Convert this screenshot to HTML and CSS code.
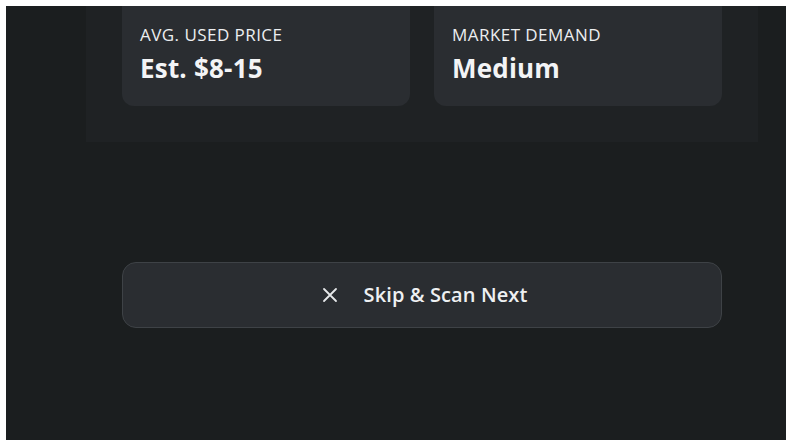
FILE: index.html
```html
<!DOCTYPE html>
<html>
<head>
<meta charset="utf-8">
<link rel="stylesheet" href="styles.css">
</head>
<body>
<div class="app">
  <div class="panel">
    <div class="card">
      <div class="label">AVG. USED PRICE</div>
      <div class="value">Est. $8-15</div>
    </div>
    <div class="card">
      <div class="label">MARKET DEMAND</div>
      <div class="value">Medium</div>
    </div>
  </div>
  <button class="skip">
    <svg class="x" width="16" height="16" viewBox="0 0 16 16"><path d="M2 2L14 14M14 2L2 14" stroke="#e6e8ea" stroke-width="1.8" stroke-linecap="round"/></svg>
    <span>Skip &amp; Scan Next</span>
  </button>
</div>
</body>
</html>
```
FILE: styles.css
```css
html, body { background: #ffffff; }
body { margin: 6px; font-family: "Open Sans", "Noto Sans", sans-serif; }
.app {
  width: 780px;
  height: 434px;
  background: #1b1e1f;
  box-sizing: border-box;
  padding-left: 80px;
  overflow: hidden;
}
.panel {
  width: 672px;
  box-sizing: border-box;
  padding: 0 36px 36px;
  background: #1f2224;
  display: grid;
  grid-template-columns: 1fr 1fr;
  gap: 24px;
}
.card {
  height: 100px;
  box-sizing: border-box;
  background: #2a2d31;
  border-radius: 0 0 12px 12px;
  padding: 18px 18px 0;
  color: #f3f4f6;
}
.label { font-size: 17px; line-height: 22px; color: #eceef0; letter-spacing: 0.45px; }
.value { font-size: 26px; font-weight: 700; line-height: 34px; margin-top: 5px; letter-spacing: 0.2px; }
.skip {
  display: flex;
  align-items: center;
  justify-content: center;
  gap: 26px;
  margin: 120px 0 0 36px;
  width: 600px;
  height: 66px;
  background: #2a2d31;
  border: 1px solid #3e4246;
  border-radius: 14px;
  color: #eef0f2;
  font-family: "Open Sans", "Noto Sans", sans-serif;
  font-size: 20px;
  font-weight: 600;
  letter-spacing: 0.1px;
  padding: 0 0 2px 5px;
}
.x { display: block; margin-top: 2px; }
```
